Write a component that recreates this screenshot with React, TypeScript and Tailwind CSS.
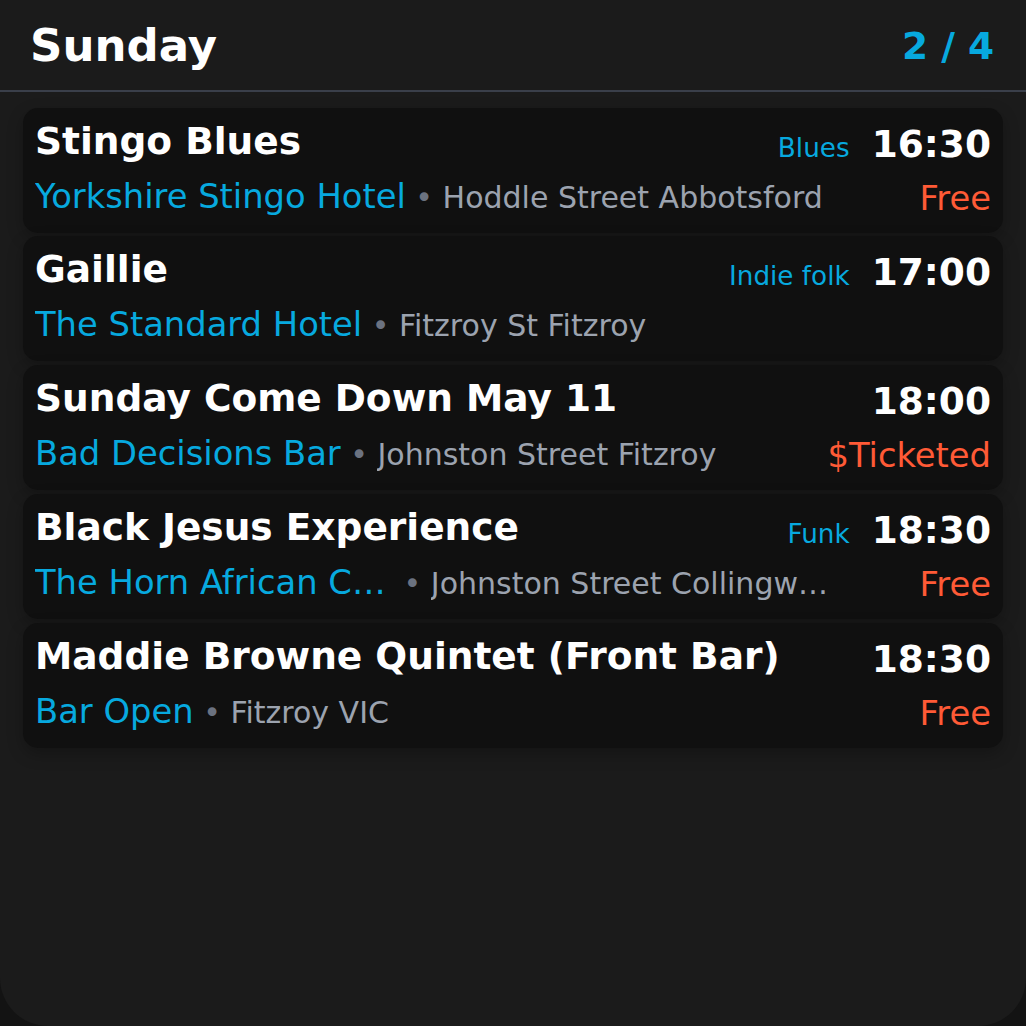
import React from "react";

type Gig = {
  title: string;
  venue: string;
  address: string;
  time: string;
  genre?: string;
  price?: string;
};

const gigs: Gig[] = [
  { title: "Stingo Blues", venue: "Yorkshire Stingo Hotel", address: "Hoddle Street Abbotsford", time: "16:30", genre: "Blues", price: "Free" },
  { title: "Gaillie", venue: "The Standard Hotel", address: "Fitzroy St Fitzroy", time: "17:00", genre: "Indie folk" },
  { title: "Sunday Come Down May 11", venue: "Bad Decisions Bar", address: "Johnston Street Fitzroy", time: "18:00", price: "$Ticketed" },
  { title: "Black Jesus Experience", venue: "The Horn African Cafe", address: "Johnston Street Collingwood", time: "18:30", genre: "Funk", price: "Free" },
  { title: "Maddie Browne Quintet (Front Bar)", venue: "Bar Open", address: "Fitzroy VIC", time: "18:30", price: "Free" },
];

const GigCard = ({ gig }: { gig: Gig }) => (
  <div className="h-[125px] shrink-0 rounded-[15px] bg-[#101010] px-[12px] pt-[11px] shadow-[0_6px_16px_rgba(0,0,0,0.25)]">
    <div className="flex h-[45px] items-start justify-between">
      <div className="min-w-0 flex-1 truncate text-[37.5px] font-bold leading-[45px] text-white">
        {gig.title}
      </div>
      <div className="mt-[3px] flex shrink-0 items-baseline gap-[22px] pl-[16px]">
        {gig.genre && (
          <span className="text-[26.25px] leading-[45px] text-[#07a9df]">{gig.genre}</span>
        )}
        <span className="text-[37.5px] font-bold leading-[45px] text-white">{gig.time}</span>
      </div>
    </div>
    <div className="mt-[13px] flex items-start">
      <div className="flex min-w-0 flex-1 items-baseline">
        <span className="min-w-0 truncate text-[33.75px] leading-[40px] text-[#07a9df]">
          {gig.venue}
        </span>
        <span className="shrink-0 whitespace-pre text-[30px] leading-[40px] text-[#6b7280]"> • </span>
        <span className="min-w-0 truncate text-[30px] leading-[40px] text-[#9ca3af]">{gig.address}</span>
      </div>
      {gig.price && (
        <span className="mt-[2px] min-w-[150px] shrink-0 text-right text-[33.75px] leading-[40px] text-[#ff5a36]">
          {gig.price}
        </span>
      )}
    </div>
  </div>
);

export default function App() {
  return (
    <div className="h-[1026px] w-full bg-[#131313]" style={{ fontFamily: '"DejaVu Sans", sans-serif' }}>
      <div className="flex h-full flex-col overflow-hidden rounded-b-[48px] bg-[#1b1b1b]">
        <div className="flex items-center justify-between border-b-2 border-[#3a3f4a] pb-[10px] pl-[30px] pr-[32px] pt-[12px] leading-[1.5]">
          <h1 className="text-[45px] font-bold text-white">Sunday</h1>
          <span className="text-[37.5px] font-bold text-[#07a9df]">2 / 4</span>
        </div>
        <div className="flex flex-col gap-[3.75px] px-[23px] pt-[16px]">
          {gigs.map((g, i) => (
            <GigCard key={i} gig={g} />
          ))}
        </div>
      </div>
    </div>
  );
}
